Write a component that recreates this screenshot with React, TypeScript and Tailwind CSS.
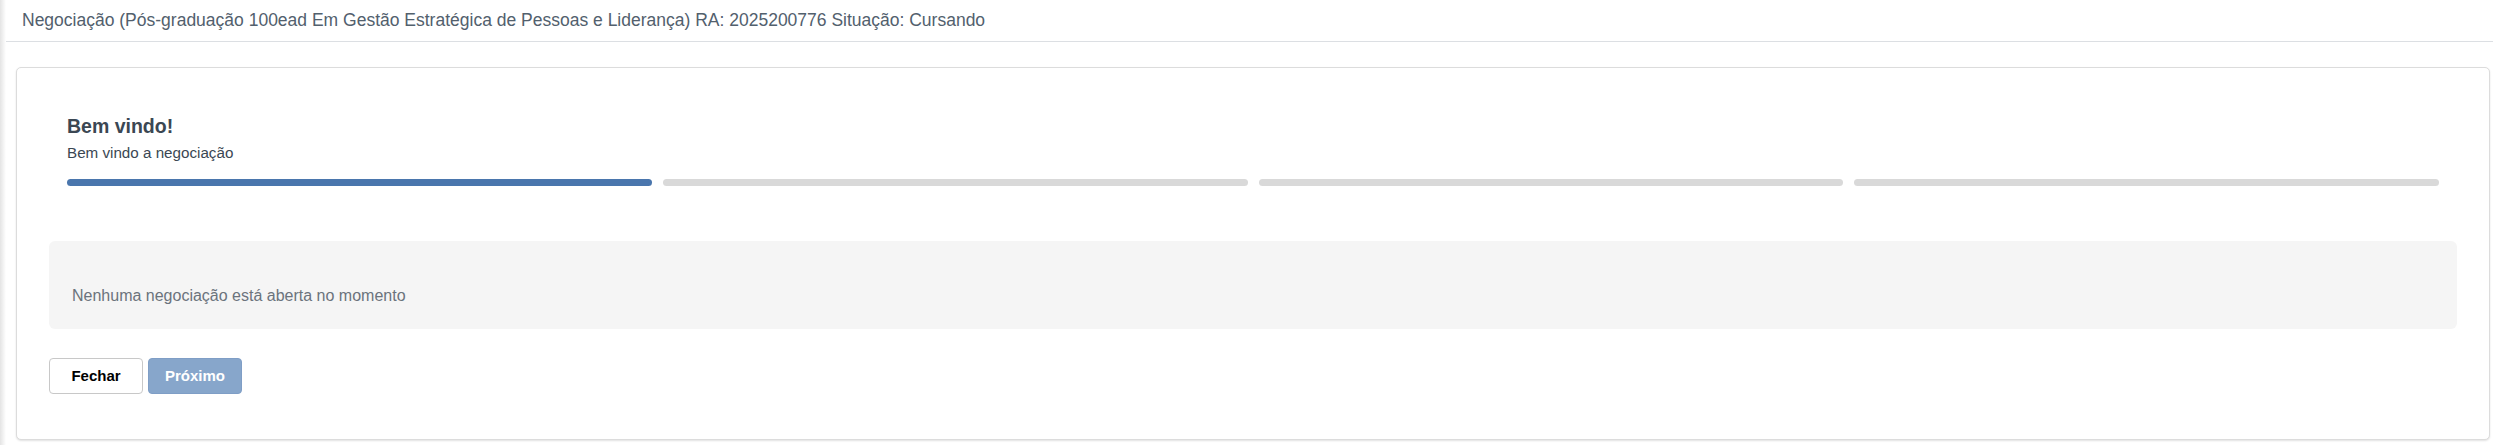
export default function App() {
    const steps = [true, false, false, false];

    return (
        <div className="flex min-h-[445px] bg-white font-['Liberation_Sans',Arial,sans-serif]">
            {/* left shadow strip */}
            <div className="w-[6px] shrink-0 bg-linear-to-r from-[#e4e4e4] to-white" />

            <div className="flex-1 min-w-0">
                <header className="h-[42px] flex items-center pl-[16px] border-b border-[#dcdfe3]">
                    <span className="text-[17.5px] text-[#52606d]">
                        Negociação (Pós-graduação 100ead Em Gestão Estratégica de Pessoas e Liderança) RA: 2025200776 Situação: Cursando
                    </span>
                </header>

                {/* Card */}
                <div className="mt-[25px] ml-[10px] mr-[3px] h-[373px] rounded-[5px] border border-[#dcdcdc] bg-white shadow-[0_1px_2px_rgba(0,0,0,0.12)] px-[32px] pt-[32px]">
                    <div className="px-[18px] pt-[14px]">
                        <h1 className="text-[19.5px] leading-[24px] font-bold text-[#3b4753]">Bem vindo!</h1>
                        <p className="mt-[6px] text-[15.2px] leading-[18px] text-[#3b4753]">Bem vindo a negociação</p>
                        <div className="mt-[17px] grid grid-cols-4 gap-[11px]">
                            {steps.map((active, i) => (
                                <div
                                    key={i}
                                    className={active ? "h-[7px] rounded-full bg-[#4a76ad]" : "h-[7px] rounded-full bg-[#d9d9d9]"}
                                />
                            ))}
                        </div>
                    </div>

                    <div className="mt-[55px] h-[88px] rounded-[6px] bg-[#f5f5f5] pl-[23px] pt-[43px]">
                        <p className="text-[16px] leading-[24px] text-[#6b737c]">Nenhuma negociação está aberta no momento</p>
                    </div>

                    <div className="mt-[29px] flex gap-[5px]">
                        <button className="w-[94px] h-[36px] rounded-[4px] border border-[#c8c8c8] bg-white text-[15px] font-bold text-black">
                            Fechar
                        </button>
                        <button className="w-[94px] h-[36px] rounded-[4px] border border-[#7f9ec6] bg-[#87a6cb] text-[15px] font-bold text-white">
                            Próximo
                        </button>
                    </div>
                </div>
            </div>
        </div>
    );
}
